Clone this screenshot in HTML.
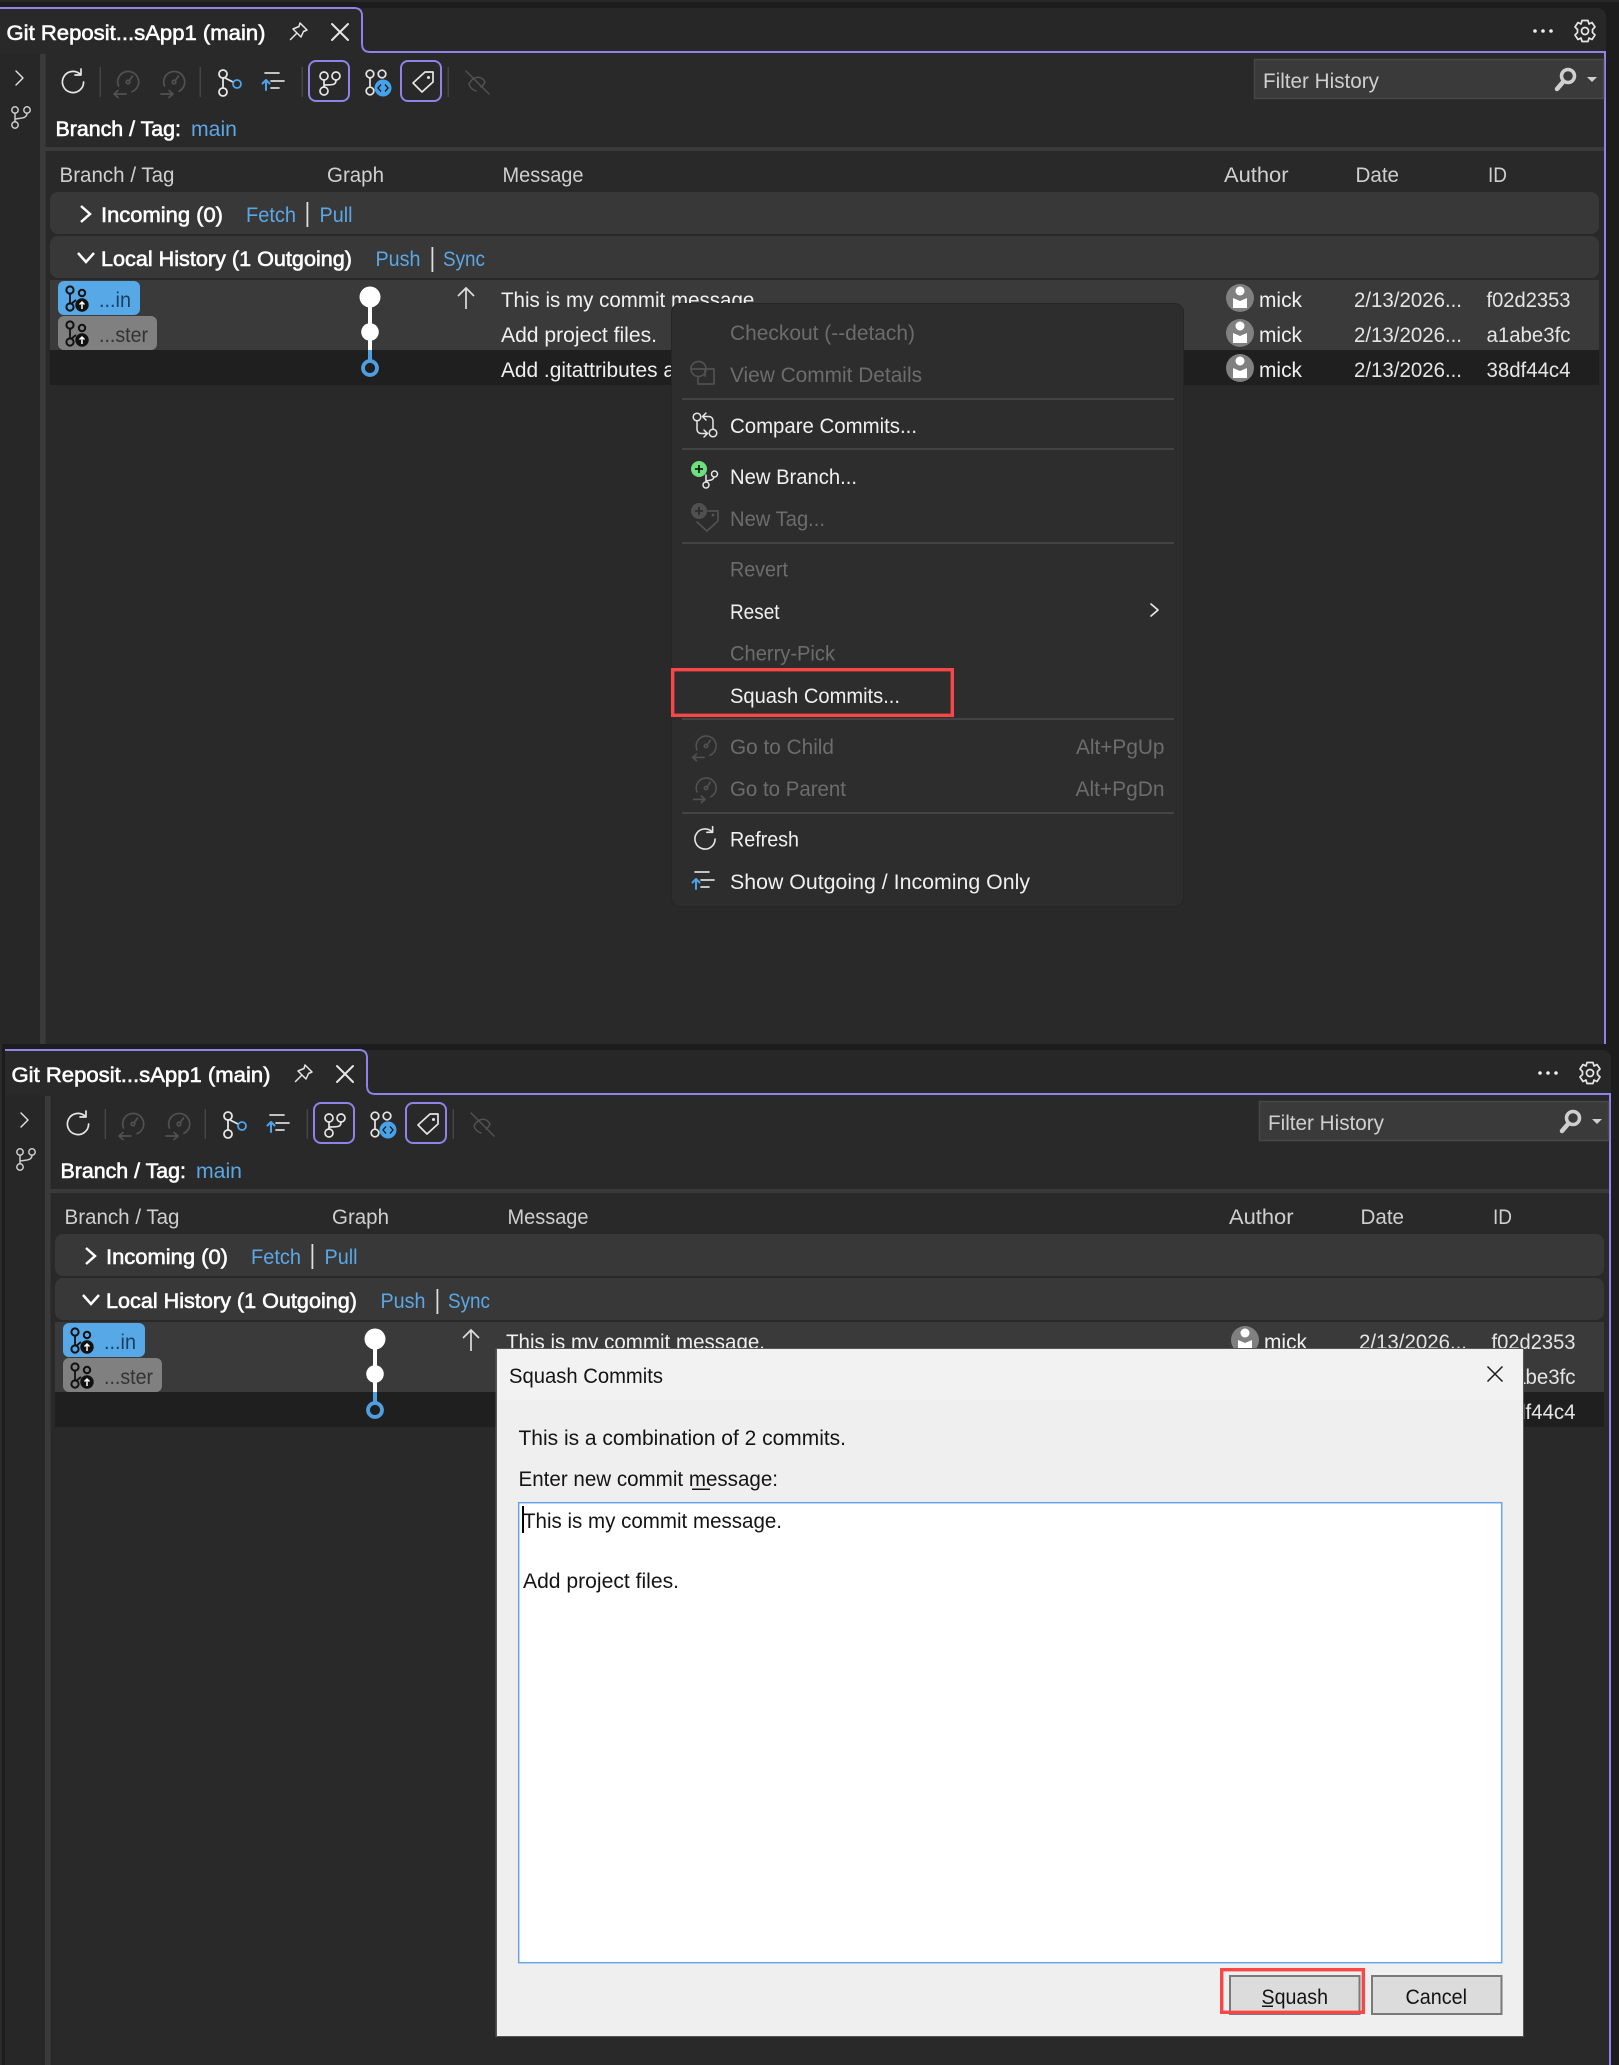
<!DOCTYPE html>
<html><head><meta charset="utf-8"><title>Squash Commits</title>
<style>
html,body{margin:0;padding:0;background:#282828;width:1619px;height:2065px;overflow:hidden}
svg{display:block}
text{font-family:"Liberation Sans",sans-serif;font-size:21px;fill:#f0f0f0}
.h{fill:#cfcfcf}
.b{fill:#fff;stroke:#fff;stroke-width:.6px}
.l{fill:#5ba7e6}
.d{fill:#6c6c6c}
.k{fill:#141414}
.c{fill:#e4e4e4}
.i{fill:none;stroke:#e6e6e6;stroke-width:1.7;stroke-linecap:round;stroke-linejoin:round}
.o{fill:none;stroke:#515151;stroke-width:1.7;stroke-linecap:round;stroke-linejoin:round}
</style></head><body>
<svg xmlns="http://www.w3.org/2000/svg" width="1619" height="2065" viewBox="0 0 1619 2065">
<defs>
<g id="refresh"><path d="M7.500-7.500A10.600 10.600 0 1 0 10.600 0"/><path d="M8-13V-7H2"/></g>
<g id="gchild"><path d="M-9.500 4A10.500 10.500 0 1 1 4 9.700"/><path d="M1-1 4.500-6"/><circle cx="0" cy="0" r="1.800"/><path d="M-14 12H-2M-14 12l4-3.500M-14 12l4 3.500"/></g>
<g id="gparent"><path d="M-9.500 4A10.500 10.500 0 1 1 5 9.300"/><path d="M1-1 4.500-6"/><circle cx="0" cy="0" r="1.800"/><path d="M-13 12H-1M-1 12l-4-3.500M-1 12l-4 3.500"/></g>
<g id="branch3"><circle cx="-5" cy="-6" r="4"/><circle cx="7" cy="-6" r="4"/><circle cx="-5" cy="9" r="4"/><path d="M-5-2V5M7-2C7 3 4 3-5 3"/></g>
<g id="outgo" class="i"><path d="M-1-8H13M5 0H18M5 7H13" stroke="#d8d8d8"/><path d="M0 9V-1M-3.500 2.500 0-1 3.500 2.500" stroke="#4da3ea" stroke-width="2"/></g>
<g id="ticon"><circle cx="0" cy="-10" r="3.600" fill="none" stroke="#111" stroke-width="2"/><circle cx="0" cy="7" r="3.600" fill="none" stroke="#111" stroke-width="2"/><circle cx="12" cy="-7" r="3.200" fill="none" stroke="#111" stroke-width="2"/><path d="M0-6V3M1 4 6 0" stroke="#111" stroke-width="1.800" fill="none"/><circle cx="12" cy="5" r="6.700" fill="#111"/><path d="M12 9V2M9.500 4.500 12 2l2.500 2.500" stroke="#fff" stroke-width="1.500" fill="none"/></g>
<g id="avatar"><circle r="14" fill="#808080"/><circle cx="0" cy="-7" r="4.500" fill="#fff"/><path d="M-7 0 0 3 7 0V10H-7Z" fill="#fff"/></g>

<g id="chrome">
<rect x="-5" y="2" width="1630" height="6" fill="#1c1c1c"/>
<rect x="-5" y="8" width="1630" height="1040" fill="#1c1c1c"/>
<rect x="0" y="8" width="1606" height="1040" rx="8" fill="#272727"/>
<rect x="0" y="53" width="1605" height="1000" fill="#292929"/>
<path d="M0 8H354Q362 8 362 16V44Q362 52 370 52H1605V1044" fill="none" stroke="#8f82e8" stroke-width="2"/>
<path d="M0 9H354Q361 9 361 16V44Q361 53 370 53H0Z" fill="#292929"/>
<rect x="0" y="53" width="40" height="1000" fill="#272727"/>
<rect x="40" y="54" width="5.500" height="1000" fill="#3a3a3a"/>
<rect x="45" y="147" width="1559" height="4" fill="#3a3a3a"/>
<!-- tab icons -->
<g class="i"><path d="M300 23 307 30 303.500 31.500 301 37 293 29 299 26.500ZM297 33 290.500 39.500" stroke-width="1.500"/><path d="M332 24 348 40M348 24 332 40" stroke-width="2"/></g>
<g fill="#eee"><circle cx="1535" cy="31" r="1.800"/><circle cx="1543" cy="31" r="1.800"/><circle cx="1551" cy="31" r="1.800"/></g>
<g class="i" transform="translate(1585,31)"><circle r="3.500"/><path d="M-3-10.500H3L4-7 7-8.500 10-4 7.500-1.500V1.500L10 4 7 8.500 4 7 3 10.500H-3L-4 7-7 8.500-10 4-7.500 1.500V-1.500L-10-4-7-8.500-4-7Z"/></g>
<!-- rail -->
<path class="i" d="M16 71 23 78 16 85" stroke="#ccc" style="stroke-width:1.400"/>
<g class="i" transform="translate(20,118)" style="stroke:#ccc;stroke-width:1.500"><circle cx="-5" cy="-8" r="3.200"/><circle cx="7" cy="-8" r="3.200"/><circle cx="-5" cy="7" r="3.200"/><path d="M-5-5V4M7-5C7 0 3 0-5 1"/></g>
<!-- toolbar -->
<use href="#refresh" class="i" transform="translate(73,82)"/>
<rect x="99.500" y="67" width="1.500" height="30" fill="#444"/>
<use href="#gchild" class="o" transform="translate(128,82)"/>
<use href="#gparent" class="o" transform="translate(174,82)"/>
<rect x="199.500" y="67" width="1.500" height="30" fill="#444"/>
<g class="i" style="stroke-width:1.800"><circle cx="223" cy="74" r="4"/><circle cx="223" cy="92" r="4"/><path d="M223 78V88M225 78 233 82"/><circle cx="237" cy="84" r="4" style="stroke:#4da3ea"/></g>
<use href="#outgo" transform="translate(266,81)"/>
<rect x="301.500" y="67" width="1.500" height="30" fill="#444"/>
<rect x="309" y="61" width="40" height="40" rx="7" fill="none" stroke="#8f82e8" stroke-width="2"/>
<use href="#branch3" class="i" transform="translate(329,82)"/>
<g class="i"><circle cx="370" cy="74" r="3.800"/><circle cx="382" cy="74" r="3.800"/><circle cx="370" cy="91" r="3.800"/><path d="M370 78V87"/></g>
<circle cx="383" cy="88" r="8.500" fill="#46a3ea"/>
<path d="M381 84.500 378 88 381 91.500M385 84.500 388 88 385 91.500" stroke="#111" stroke-width="1.300" fill="none"/>
<rect x="401" y="61" width="40" height="40" rx="7" fill="none" stroke="#8f82e8" stroke-width="2"/>
<path class="i" d="M425 72H433V82L422 92 413 83Z"/><circle cx="428.500" cy="77.500" r="1.500" fill="#e6e6e6"/>
<rect x="447.500" y="67" width="1.500" height="30" fill="#444"/>
<g class="o" style="stroke-width:1.500"><path d="M466 71 489 94M469 84C473 76 481 75 485 82 484 84 483 86 481 87M476 91C473 90 470 88 469 84"/></g>
<!-- filter -->
<rect x="1254.500" y="59.500" width="349" height="39" fill="#3a3a3a" stroke="#474747" stroke-width="1.500"/>
<circle cx="1568" cy="76" r="6.500" fill="none" stroke="#cfcfcf" stroke-width="3.500"/>
<path d="M1563 82 1557 89" stroke="#cfcfcf" stroke-width="4.500" stroke-linecap="round"/>
<path d="M1587 77H1597L1592 82Z" fill="#cfcfcf"/>
<!-- section rows -->
<rect x="50" y="192" width="1549" height="42" rx="8" fill="#383838"/>
<rect x="50" y="236" width="1549" height="42" rx="8" fill="#383838"/>
<path d="M81 206 90 214 81 222" fill="none" stroke="#fff" stroke-width="2.500"/>
<path d="M78 253 86 262 94 253" fill="none" stroke="#fff" stroke-width="2.500"/>
<rect x="306.500" y="202" width="1.800" height="25" fill="#ddd"/>
<rect x="431.500" y="247" width="1.800" height="25" fill="#ddd"/>
<!-- rows -->
<rect x="50" y="280" width="1549" height="70" fill="#3a3a3a"/>
<rect x="50" y="350" width="1549" height="35" fill="#1f1f1f"/>
<rect x="58" y="281" width="82" height="34" rx="6" fill="#56a8e6"/>
<rect x="58" y="316" width="99" height="34" rx="6" fill="#808080"/>
<use href="#ticon" transform="translate(70,300)"/>
<use href="#ticon" transform="translate(70,335)"/>
<rect x="368" y="297" width="4" height="53" fill="#fff"/>
<rect x="368" y="350" width="4" height="12" fill="#4f9fe0"/>
<circle cx="370" cy="297" r="10.500" fill="#fff"/>
<circle cx="370" cy="332" r="8.800" fill="#fff"/>
<circle cx="370" cy="368" r="7" fill="#1f1f1f" stroke="#4f9fe0" stroke-width="3.800"/>
<path d="M466 309V289M458 296 466 288 474 296" fill="none" stroke="#ddd" stroke-width="1.700"/>
<use href="#avatar" transform="translate(1240,298)"/>
<use href="#avatar" transform="translate(1240,333)"/>
<use href="#avatar" transform="translate(1240,368)"/>
</g>
</defs>

<rect width="1619" height="2065" fill="#282828"/>

<!-- ========== PANEL 1 ========== -->
<use href="#chrome"/>
<g>
<text class="b" x="6.500" y="40" textLength="259" lengthAdjust="spacingAndGlyphs">Git Reposit...sApp1 (main)</text>
<text class="b" x="55.500" y="136" textLength="125.500" lengthAdjust="spacingAndGlyphs">Branch / Tag:</text>
<text class="l" x="191" y="136" textLength="46" lengthAdjust="spacingAndGlyphs">main</text>
<text class="h" x="1263" y="88" textLength="116" lengthAdjust="spacingAndGlyphs">Filter History</text>
<text class="h" x="59.500" y="182" textLength="115" lengthAdjust="spacingAndGlyphs">Branch / Tag</text>
<text class="h" x="327" y="182" textLength="57" lengthAdjust="spacingAndGlyphs">Graph</text>
<text class="h" x="502.500" y="182" textLength="81" lengthAdjust="spacingAndGlyphs">Message</text>
<text class="h" x="1224" y="182" textLength="64.500" lengthAdjust="spacingAndGlyphs">Author</text>
<text class="h" x="1355.500" y="182" textLength="43.500" lengthAdjust="spacingAndGlyphs">Date</text>
<text class="h" x="1488" y="182" textLength="19" lengthAdjust="spacingAndGlyphs">ID</text>
<text class="b" x="101" y="222" textLength="122" lengthAdjust="spacingAndGlyphs">Incoming (0)</text>
<text class="l" x="246" y="222" textLength="50" lengthAdjust="spacingAndGlyphs">Fetch</text>
<text class="l" x="319.500" y="222" textLength="33" lengthAdjust="spacingAndGlyphs">Pull</text>
<text class="b" x="101" y="266" textLength="251" lengthAdjust="spacingAndGlyphs">Local History (1 Outgoing)</text>
<text class="l" x="375.500" y="266" textLength="45" lengthAdjust="spacingAndGlyphs">Push</text>
<text class="l" x="443" y="266" textLength="42" lengthAdjust="spacingAndGlyphs">Sync</text>
<text style="fill:#1d3f5f" x="99" y="307" textLength="32" lengthAdjust="spacingAndGlyphs">...in</text>
<text style="fill:#333" x="99" y="342" textLength="49" lengthAdjust="spacingAndGlyphs">...ster</text>
<text x="501" y="307" textLength="259" lengthAdjust="spacingAndGlyphs">This is my commit message.</text>
<text x="501" y="342" textLength="156" lengthAdjust="spacingAndGlyphs">Add project files.</text>
<text x="501" y="377" textLength="174" lengthAdjust="spacingAndGlyphs">Add .gitattributes a</text>
<text x="1259" y="307" textLength="43" lengthAdjust="spacingAndGlyphs">mick</text>
<text x="1259" y="342" textLength="43" lengthAdjust="spacingAndGlyphs">mick</text>
<text x="1259" y="377" textLength="43" lengthAdjust="spacingAndGlyphs">mick</text>
<text class="c" x="1354" y="307" textLength="108" lengthAdjust="spacingAndGlyphs">2/13/2026...</text>
<text class="c" x="1354" y="342" textLength="108" lengthAdjust="spacingAndGlyphs">2/13/2026...</text>
<text class="c" x="1354" y="377" textLength="108" lengthAdjust="spacingAndGlyphs">2/13/2026...</text>
<text class="c" x="1486.500" y="307" textLength="84" lengthAdjust="spacingAndGlyphs">f02d2353</text>
<text class="c" x="1486.500" y="342" textLength="84" lengthAdjust="spacingAndGlyphs">a1abe3fc</text>
<text class="c" x="1486.500" y="377" textLength="84" lengthAdjust="spacingAndGlyphs">38df44c4</text>
</g>

<!-- context menu -->
<rect x="671.500" y="303.500" width="512" height="603" rx="9" fill="#2d2d2d" stroke="#262626"/>
<g fill="#434343">
<rect x="682" y="398" width="492" height="2"/><rect x="682" y="448" width="492" height="2"/>
<rect x="682" y="542" width="492" height="2"/><rect x="682" y="718" width="492" height="2"/>
<rect x="682" y="812" width="492" height="2"/>
</g>
<g class="o"><circle cx="698.500" cy="369" r="7.500"/><path d="M706 369H714V384H698V376.500"/><path d="M692 369H705V376"/></g>
<g class="i" style="stroke-width:1.500"><circle cx="697" cy="417" r="3.800"/><circle cx="713" cy="433" r="3.800"/><path d="M697 421V429C697 432 699 433.500 701 433.500H707M704 430 707.500 433.500 704 437M713 429V421C713 418 711 416.500 709 416.500H703M706 413 702.500 416.500 706 420"/></g>
<circle cx="699" cy="469" r="8" fill="#6ce07c"/>
<path d="M695 469H703M699 465V473" stroke="#1c1c1c" stroke-width="1.800"/>
<g class="i" style="stroke-width:1.500"><circle cx="706" cy="485" r="3"/><circle cx="714.500" cy="474" r="3"/><path d="M706 482V475M714 477C713 481 709 480 706 481"/></g>
<circle cx="699" cy="511" r="8" fill="#505050"/>
<path d="M695 511H703M699 507V515" stroke="#2d2d2d" stroke-width="1.800"/>
<path class="o" d="M708 511H718V521L707 531 697 522"/><circle cx="713" cy="515" r="1.300" fill="#565656"/>
<path class="i" d="M1151 604 1158 610 1151 616"/>
<use href="#gchild" class="o" transform="translate(706,746) scale(.95)"/>
<use href="#gparent" class="o" transform="translate(706,788) scale(.95)"/>
<use href="#refresh" class="i" transform="translate(705,839) scale(.95)"/>
<use href="#outgo" transform="translate(696,880)"/>
<text class="d" x="730" y="340" textLength="185" lengthAdjust="spacingAndGlyphs">Checkout (--detach)</text>
<text class="d" x="730" y="382" textLength="192" lengthAdjust="spacingAndGlyphs">View Commit Details</text>
<text x="730" y="433" textLength="187" lengthAdjust="spacingAndGlyphs">Compare Commits...</text>
<text x="730" y="484" textLength="127" lengthAdjust="spacingAndGlyphs">New Branch...</text>
<text class="d" x="730" y="526" textLength="95" lengthAdjust="spacingAndGlyphs">New Tag...</text>
<text class="d" x="730" y="576.500" textLength="58" lengthAdjust="spacingAndGlyphs">Revert</text>
<text x="730" y="619" textLength="49.500" lengthAdjust="spacingAndGlyphs">Reset</text>
<text class="d" x="730" y="660.500" textLength="105" lengthAdjust="spacingAndGlyphs">Cherry-Pick</text>
<text x="730" y="703" textLength="170" lengthAdjust="spacingAndGlyphs">Squash Commits...</text>
<text class="d" x="730" y="754" textLength="104" lengthAdjust="spacingAndGlyphs">Go to Child</text>
<text class="d" x="1076" y="754" textLength="88.500" lengthAdjust="spacingAndGlyphs">Alt+PgUp</text>
<text class="d" x="1075.500" y="796" textLength="89" lengthAdjust="spacingAndGlyphs">Alt+PgDn</text>
<text class="d" x="730" y="796" textLength="116" lengthAdjust="spacingAndGlyphs">Go to Parent</text>
<text x="730" y="846.500" textLength="69" lengthAdjust="spacingAndGlyphs">Refresh</text>
<text x="730" y="889" textLength="300" lengthAdjust="spacingAndGlyphs">Show Outgoing / Incoming Only</text>
<rect x="672.700" y="669.700" width="279.600" height="45.600" fill="none" stroke="#f94646" stroke-width="3.400"/>

<!-- ========== PANEL 2 ========== -->
<rect x="0" y="1044" width="2" height="1021" fill="#2a2a2a"/>
<svg x="2" y="1044" width="1617" height="1021" viewBox="2 1044 1617 1021">
<use href="#chrome" transform="translate(5,1042)"/>
</svg>
<g transform="translate(5,1042)">
<text class="b" x="6.500" y="40" textLength="259" lengthAdjust="spacingAndGlyphs">Git Reposit...sApp1 (main)</text>
<text class="b" x="55.500" y="136" textLength="125.500" lengthAdjust="spacingAndGlyphs">Branch / Tag:</text>
<text class="l" x="191" y="136" textLength="46" lengthAdjust="spacingAndGlyphs">main</text>
<text class="h" x="1263" y="88" textLength="116" lengthAdjust="spacingAndGlyphs">Filter History</text>
<text class="h" x="59.500" y="182" textLength="115" lengthAdjust="spacingAndGlyphs">Branch / Tag</text>
<text class="h" x="327" y="182" textLength="57" lengthAdjust="spacingAndGlyphs">Graph</text>
<text class="h" x="502.500" y="182" textLength="81" lengthAdjust="spacingAndGlyphs">Message</text>
<text class="h" x="1224" y="182" textLength="64.500" lengthAdjust="spacingAndGlyphs">Author</text>
<text class="h" x="1355.500" y="182" textLength="43.500" lengthAdjust="spacingAndGlyphs">Date</text>
<text class="h" x="1488" y="182" textLength="19" lengthAdjust="spacingAndGlyphs">ID</text>
<text class="b" x="101" y="222" textLength="122" lengthAdjust="spacingAndGlyphs">Incoming (0)</text>
<text class="l" x="246" y="222" textLength="50" lengthAdjust="spacingAndGlyphs">Fetch</text>
<text class="l" x="319.500" y="222" textLength="33" lengthAdjust="spacingAndGlyphs">Pull</text>
<text class="b" x="101" y="266" textLength="251" lengthAdjust="spacingAndGlyphs">Local History (1 Outgoing)</text>
<text class="l" x="375.500" y="266" textLength="45" lengthAdjust="spacingAndGlyphs">Push</text>
<text class="l" x="443" y="266" textLength="42" lengthAdjust="spacingAndGlyphs">Sync</text>
<text style="fill:#1d3f5f" x="99" y="307" textLength="32" lengthAdjust="spacingAndGlyphs">...in</text>
<text style="fill:#333" x="99" y="342" textLength="49" lengthAdjust="spacingAndGlyphs">...ster</text>
<text x="501" y="307" textLength="259" lengthAdjust="spacingAndGlyphs">This is my commit message.</text>
<text x="1259" y="307" textLength="43" lengthAdjust="spacingAndGlyphs">mick</text>
<text class="c" x="1354" y="307" textLength="108" lengthAdjust="spacingAndGlyphs">2/13/2026...</text>
<text class="c" x="1486.500" y="307" textLength="84" lengthAdjust="spacingAndGlyphs">f02d2353</text>
<text class="c" x="1486.500" y="342" textLength="84" lengthAdjust="spacingAndGlyphs">a1abe3fc</text>
<text class="c" x="1486.500" y="377" textLength="84" lengthAdjust="spacingAndGlyphs">38df44c4</text>
</g>

<!-- dialog -->
<rect x="495.500" y="1348" width="1028.500" height="689" fill="#555"/>
<rect x="497" y="1349" width="1026" height="687" fill="#efefef"/>
<rect x="497" y="1349" width="1026" height="51" fill="#f2f2f2"/>
<text class="k" x="509" y="1383" textLength="154" lengthAdjust="spacingAndGlyphs">Squash Commits</text>
<path d="M1487.500 1366.500 1502.500 1381.500M1502.500 1366.500 1487.500 1381.500" stroke="#1a1a1a" stroke-width="1.500" fill="none"/>
<text class="k" x="518.500" y="1445" textLength="327.500" lengthAdjust="spacingAndGlyphs">This is a combination of 2 commits.</text>
<text class="k" x="518.500" y="1486" textLength="259.500" lengthAdjust="spacingAndGlyphs">Enter new commit message:</text>
<rect x="692" y="1488.500" width="18" height="1.500" fill="#141414"/>
<rect x="518.700" y="1502.700" width="983" height="460" fill="#fff" stroke="#6aa5e5" stroke-width="1.500"/>
<rect x="522" y="1506" width="2" height="27" fill="#000"/>
<text class="k" x="523" y="1528" textLength="259" lengthAdjust="spacingAndGlyphs">This is my commit message.</text>
<text class="k" x="523" y="1588" textLength="156" lengthAdjust="spacingAndGlyphs">Add project files.</text>
<rect x="1230" y="1976" width="129.500" height="38" fill="#dcdcdc" stroke="#7a7a7a" stroke-width="2"/>
<rect x="1372" y="1976" width="129.500" height="38" fill="#dcdcdc" stroke="#7a7a7a" stroke-width="2"/>
<text class="k" x="1261.500" y="2004" textLength="66.500" lengthAdjust="spacingAndGlyphs">Squash</text>
<rect x="1262" y="2005.500" width="11" height="1.500" fill="#141414"/>
<text class="k" x="1405.500" y="2004" textLength="61.500" lengthAdjust="spacingAndGlyphs">Cancel</text>
<rect x="1221.700" y="1969.700" width="141.600" height="42.600" fill="none" stroke="#f94646" stroke-width="3.400"/>
</svg>
</body></html>
